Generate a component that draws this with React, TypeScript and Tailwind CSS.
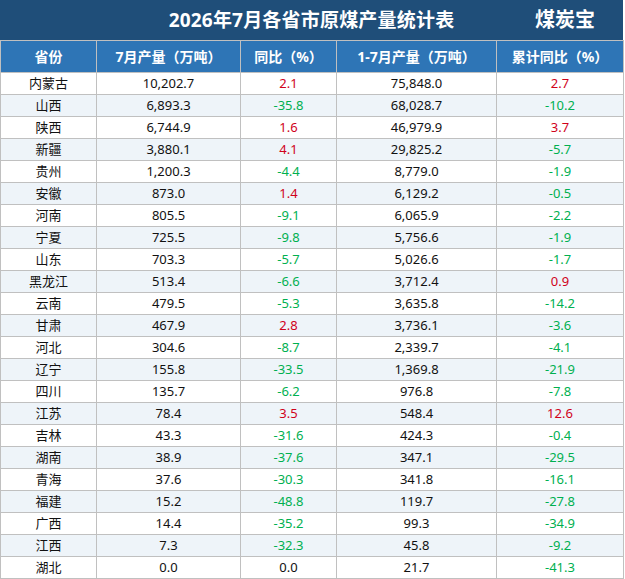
import React from "react";

type Row = [string, string, string, string, string];

const rows: Row[] = [
  ["内蒙古", "10,202.7", "2.1", "75,848.0", "2.7"],
  ["山西", "6,893.3", "-35.8", "68,028.7", "-10.2"],
  ["陕西", "6,744.9", "1.6", "46,979.9", "3.7"],
  ["新疆", "3,880.1", "4.1", "29,825.2", "-5.7"],
  ["贵州", "1,200.3", "-4.4", "8,779.0", "-1.9"],
  ["安徽", "873.0", "1.4", "6,129.2", "-0.5"],
  ["河南", "805.5", "-9.1", "6,065.9", "-2.2"],
  ["宁夏", "725.5", "-9.8", "5,756.6", "-1.9"],
  ["山东", "703.3", "-5.7", "5,026.6", "-1.7"],
  ["黑龙江", "513.4", "-6.6", "3,712.4", "0.9"],
  ["云南", "479.5", "-5.3", "3,635.8", "-14.2"],
  ["甘肃", "467.9", "2.8", "3,736.1", "-3.6"],
  ["河北", "304.6", "-8.7", "2,339.7", "-4.1"],
  ["辽宁", "155.8", "-33.5", "1,369.8", "-21.9"],
  ["四川", "135.7", "-6.2", "976.8", "-7.8"],
  ["江苏", "78.4", "3.5", "548.4", "12.6"],
  ["吉林", "43.3", "-31.6", "424.3", "-0.4"],
  ["湖南", "38.9", "-37.6", "347.1", "-29.5"],
  ["青海", "37.6", "-30.3", "341.8", "-16.1"],
  ["福建", "15.2", "-48.8", "119.7", "-27.8"],
  ["广西", "14.4", "-35.2", "99.3", "-34.9"],
  ["江西", "7.3", "-32.3", "45.8", "-9.2"],
  ["湖北", "0.0", "0.0", "21.7", "-41.3"],
];

const headers = ["省份", "7月产量（万吨）", "同比（%）", "1-7月产量（万吨）", "累计同比（%）"];

// red for growth, green for decline, plain for zero
function tone(v: string) {
  const n = parseFloat(v);
  if (n > 0) return "text-[#d0021b]";
  if (n < 0) return "text-[#00b050]";
  return "text-[#111]";
}

export default function App() {
  return (
    <div
      className="w-[623px] bg-white"
      style={{ fontFamily: '"Noto Sans", "Noto Sans CJK SC", sans-serif' }}
    >
      <div className="relative flex h-[40px] items-center justify-center bg-[#1f4e79] text-white">
        <span className="text-[19px] font-bold tracking-[0.2px]">2026年7月各省市原煤产量统计表</span>
        <span className="absolute right-[28px] text-[20px] font-bold">煤炭宝</span>
      </div>
      <table className="w-[623px] table-fixed border-collapse">
        <colgroup>
          <col className="w-[96px]" />
          <col className="w-[144px]" />
          <col className="w-[96px]" />
          <col className="w-[160px]" />
          <col className="w-[127px]" />
        </colgroup>
        <thead>
          <tr className="h-[32px] bg-[#2e75b6]">
            {headers.map((h) => (
              <th
                key={h}
                className="border border-[#c0c0c0] p-0 text-center text-[14px] font-bold text-white"
              >
                {h}
              </th>
            ))}
          </tr>
        </thead>
        <tbody>
          {rows.map((r, i) => (
            <tr key={r[0]} className={"h-[22px] " + (i % 2 ? "bg-[#eef4f9]" : "bg-white")}>
              <td className="border border-[#c0c0c0] p-0 text-center text-[13px] text-[#111]">{r[0]}</td>
              <td className="border border-[#c0c0c0] p-0 text-center text-[13px] text-[#111]">{r[1]}</td>
              <td className={"border border-[#c0c0c0] p-0 text-center text-[13px] " + tone(r[2])}>{r[2]}</td>
              <td className="border border-[#c0c0c0] p-0 text-center text-[13px] text-[#111]">{r[3]}</td>
              <td className={"border border-[#c0c0c0] p-0 text-center text-[13px] " + tone(r[4])}>{r[4]}</td>
            </tr>
          ))}
        </tbody>
      </table>
    </div>
  );
}
